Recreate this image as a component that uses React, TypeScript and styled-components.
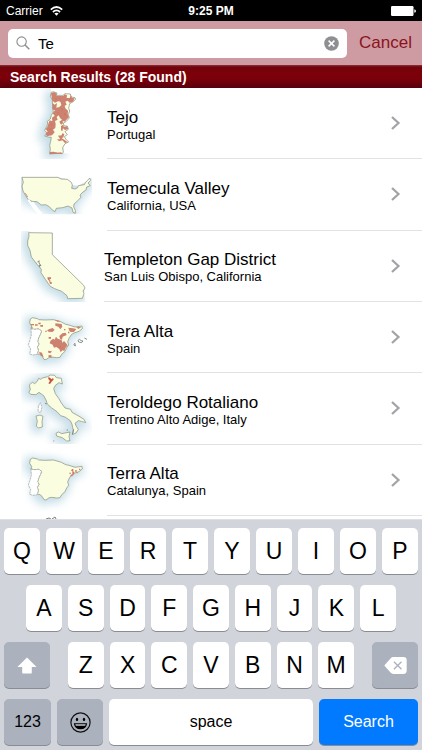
import React, { useId, useState } from "react";
import styled, { createGlobalStyle } from "styled-components";

const GlobalStyle = createGlobalStyle`
  * { box-sizing: border-box; }
  body {
    margin: 0;
    background: #fff;
    color: #000;
    font-family: "Liberation Sans", Arial, Helvetica, sans-serif;
  }
  button, input { font: inherit; color: inherit; margin: 0; }
  button { border: 0; padding: 0; background: none; cursor: pointer; }
`;

const Screen = styled.div`
  display: flex;
  flex-direction: column;
  height: 100vh;
  overflow: hidden;
`;

const StatusBar = styled.header`
  flex: none;
  display: grid;
  grid-template-columns: 1fr auto 1fr;
  align-items: center;
  height: 21px;
  padding: 0 6px;
  background: #000;
  color: #fff;
  font-size: 12px;
`;

const Carrier = styled.div`
  display: flex;
  align-items: center;
  gap: 7px;
`;

const Clock = styled.div`
  font-weight: bold;
`;

const Battery = styled.svg`
  justify-self: end;
`;

const SearchBar = styled.form`
  flex: none;
  display: flex;
  align-items: center;
  gap: 12px;
  height: 44px;
  padding: 0 10px 0 8px;
  background: #ce9ba2;
`;

const Field = styled.label`
  flex: 1;
  min-width: 0;
  display: flex;
  align-items: center;
  gap: 8px;
  height: 29px;
  padding: 0 8px;
  border-radius: 5px;
  background: #fff;
`;

const SearchInput = styled.input`
  flex: 1;
  min-width: 0;
  border: 0;
  padding: 0;
  outline: 0;
  background: transparent;
  font-size: 15px;
`;

const ClearButton = styled.button`
  display: flex;
`;

const CancelButton = styled.button`
  color: #8b1220;
  font-size: 17px;
`;

const SectionTitle = styled.h2`
  flex: none;
  margin: 0;
  height: 23px;
  padding: 0 10px;
  background: linear-gradient(#92303a 0, #6f040c 2px, #7d0008 8px, #78000a 15px, #56000c 23px);
  color: #fff;
  font-size: 14px;
  line-height: 24px;
`;

const Results = styled.ul`
  flex: 1;
  min-height: 0;
  display: grid;
  grid-template-rows: repeat(6, 1fr) 3px;
  margin: 0;
  padding: 0;
  overflow: hidden;
  list-style: none;
`;

const Result = styled.li`
  display: flex;
  min-height: 0;
  padding-left: 21px;
  overflow: hidden;
`;

const Thumb = styled.svg<{ $narrow?: boolean }>`
  flex: none;
  width: 71px;
  height: 71px;
  margin-right: ${(p) => (p.$narrow ? 12 : 15)}px;
`;

const ResultLink = styled.a`
  flex: 1;
  min-width: 0;
  display: flex;
  align-items: center;
  justify-content: space-between;
  padding-right: 21px;
  border-bottom: 1px solid #e2e2e4;
  color: inherit;
  text-decoration: none;
`;

const ResultText = styled.div`
  padding-top: 3px;
`;

const Name = styled.div`
  font-size: 17px;
  line-height: 19px;
`;

const Place = styled.div`
  font-size: 13px;
  line-height: 15px;
`;

const Keyboard = styled.section`
  flex: none;
  display: flex;
  flex-direction: column;
  gap: 11px;
  padding: 8px 4px 5px;
  border-top: 1px solid #dddfe4;
  background: #d1d4db;
`;

const KeyRow = styled.div<{ $inset?: number }>`
  display: flex;
  justify-content: space-between;
  gap: 6px;
  padding: 0 ${(p) => p.$inset ?? 0}px;
`;

const LetterGroup = styled.div`
  flex: 1;
  display: flex;
  gap: 6px;
  margin: 0 12px;
`;

const Key = styled.button<{ $tone?: "gray" | "blue"; $width?: number; $size?: number }>`
  flex: ${(p) => (p.$width ? `0 0 ${p.$width}px` : "1 1 0")};
  display: flex;
  align-items: center;
  justify-content: center;
  min-width: 0;
  height: 46px;
  border-radius: 5px;
  background: ${(p) => (p.$tone === "gray" ? "#abb1bd" : p.$tone === "blue" ? "#027aff" : "#fff")};
  color: ${(p) => (p.$tone === "blue" ? "#fff" : "#000")};
  box-shadow: 0 1px 0 #898c91;
  font-size: ${(p) => p.$size ?? 23}px;
`;

type MapShape = {
  top: number;
  land: string[];
  plain?: string;
  spots?: string;
  dots?: string;
  marks?: string;
  river?: string;
};

const IBERIA =
  "M91 42L98 38L112 41L116 44L135 45L160 44L171 47L184 51L197 58L207 60L225 66L246 63L247 71L237 79L222 84L215 88L208 98L203 110L206 120L200 128L195 139L185 148L180 157L170 158L154 156L146 158L138 164L132 163L126 153L120 148L112 146L115 135L112 126L117 117L113 109L117 96L121 88L125 78L116 72L103 73L93 71L95 63L89 54Z";
const PORTUGAL =
  "M93 71L103 73L116 72L125 78L121 88L117 96L113 109L117 117L112 126L115 135L112 148L99 150L89 147L92 132L85 119L90 105L94 90Z";

const maps: Record<string, MapShape> = {
  tejo: {
    top: 9,
    land: [
      "M154 22L160 20L171 24L168 31L190 31L194 26L211 27L213 36L225 38L227 43L218 51L209 56L206 69L209 78L205 89L208 99L198 110L190 114L192 123L202 123L205 133L195 140L202 149L193 155L199 164L206 171L195 176L188 188L190 201L187 206L167 203L149 207L151 191L149 181L152 169L154 157L145 156L134 153L141 144L134 136L143 119L142 109L151 102L154 91L160 81L158 66L157 45L151 34Z",
    ],
    spots:
      "M153 25L162 21L170 26L169 33L190 33L194 28L201 31L200 39L209 39L213 30L216 39L224 40L219 50L209 53L203 47L196 50L200 59L194 62L196 70L204 77L203 88L207 96L201 103L194 110L188 107L189 115L183 119L178 110L186 104L180 99L176 91L170 96L173 104L165 108L167 117L166 129L159 134L164 142L156 151L140 154L137 145L143 140L137 132L142 126L146 113L149 106L157 109L156 98L164 92L158 85L165 76L157 73L158 54L164 59L171 54L169 68L178 66L184 60L181 50L174 49L165 53L157 47ZM183 123L189 119L192 126L201 124L205 132L195 135L189 130L187 139L183 136ZM174 152L185 151L187 145L193 147L190 157L185 160L193 164L203 172L195 174L187 166L177 169L171 163L181 163ZM149 201L161 200L172 204L183 202L188 206L150 208Z",
    dots: "M177 38h5v5h-5zM166 40h6v5h-6zM184 70h5v6h-5zM171 81h6v5h-6zM192 84h6v7h-6zM148 129h6v6h-6zM153 117h5v5h-5z",
  },
  usa: {
    top: -17,
    land: [
      "M66 38L174 38L183 43L202 44L214 53L217 61L215 71L225 73L233 69L235 63L253 60L257 53L262 48L269 40L272 47L264 55L271 63L260 67L258 76L249 82L240 91L243 98L233 108L222 118L221 127L226 137L226 146L219 143L216 130L204 124L188 129L169 131L165 141L157 136L148 126L137 120L124 121L111 111L96 110L84 104L76 91L69 79L66 64L70 53Z",
    ],
    dots: "M79 88h2v5h2v4h-3zM75 85h2v4h-2z",
    river: "M85 105L103 132L119 148M97 112L111 132L125 148",
  },
  california: {
    top: 17,
    land: [
      "M86 22L157 23L157 88L251 180L255 188L249 197L252 205L247 219L203 220L201 211L185 198L164 190L151 183L145 175L136 162L123 142L124 132L112 118L94 95L90 75L83 60L83 47L87 33Z",
    ],
    dots: "M142 156h11v5h-4v4h-5zM147 165h4v5h4v6h-5z",
    marks: "M112 111l5-5v7l6 8l-6-2l3 7",
  },
  spainFull: {
    top: -9,
    land: [IBERIA],
    plain: PORTUGAL,
    spots:
      "M151 108L159 101L164 104L168 95L173 101L185 105L187 113L192 108L197 113L203 121L197 128L193 138L187 136L182 142L178 132L169 126L162 128L158 119L149 115ZM166 55L185 57L187 65L181 73L175 65L166 62ZM141 76L148 72L158 69L164 75L157 81L146 80ZM178 93L187 85L197 83L200 90L188 95L186 104L180 101ZM205 68L219 70L229 72L222 81L212 81L208 77ZM229 66L244 66L235 72ZM117 140L126 143L131 157L121 151ZM144 137L156 139L151 145L145 143ZM145 151L154 150L155 158L146 156ZM164 44L181 48L173 51Z",
    dots: "M92 57h10v4h-10zM105 58h8v4h-8zM115 53h7v5h-7zM121 60h8v5h-8zM136 77h4v4h-4zM146 96h7v5h-7zM192 72h4v4h-4zM204 80h4v5h-4zM94 65h4v3h-4zM177 124h6v6h-6z",
    marks: "M221 119l4-4l1 8zM234 106l5-3l4 4l6 1l-4 5l-9-2zM253 99l8 4M163 207h2",
  },
  italy: {
    top: 10,
    land: [
      "M88 46L97 38L104 42L112 35L116 26L122 29L128 25L143 21L152 16L164 17L169 24L184 26L187 43L177 39L166 47L161 57L166 72L176 86L184 100L195 115L212 119L216 128L234 138L252 149L257 159L244 155L235 153L225 161L229 170L235 179L228 190L218 194L220 182L216 164L211 153L195 142L182 138L171 126L154 114L142 103L138 91L131 78L117 68L108 75L92 74L87 68L91 59Z",
      "M168 191L176 187L185 192L210 187L207 201L210 213L200 214L187 204L170 199Z",
      "M108 139L120 136L129 140L126 155L127 172L115 175L109 169L112 155Z",
    ],
    plain: "M115 110L121 99L126 112L122 129L114 126Z",
    spots: "M145 22L151 25L154 29L159 25L161 30L156 35L150 43L145 41L150 34L145 28Z",
    marks: "M135 101l5 2M160 214h3M200 181h4M221 179l-4 16",
  },
  spainEast: {
    top: -1,
    land: [IBERIA],
    plain: PORTUGAL,
    dots: "M216 71h4v8h3v4h-6v-6h-4zM226 74h4v6h-4zM237 70h4v4h-4zM208 82h5v3h-5zM212 88h5v-5h5v5h-4v5h-6zM230 81h3v3h-3z",
  },
};

function RegionMap({ name, narrow }: { name: string; narrow?: boolean }) {
  const id = useId();
  const m = maps[name];
  return (
    <Thumb viewBox={`63 ${m.top} 213 213`} $narrow={narrow} aria-hidden="true">
      <defs>
        <filter id={id} x="-40%" y="-40%" width="180%" height="180%">
          <feGaussianBlur stdDeviation="12" />
        </filter>
      </defs>
      <g filter={`url(#${id})`} fill="#b3d3e0" stroke="#b3d3e0" strokeWidth="22" opacity="0.75" transform="translate(-6 5)">
        {m.land.map((d) => <path key={d} d={d} />)}
      </g>
      {name === "california" && <path d="M88 17H276V230H257L252 205L255 188L157 88V23H88Z" fill="#fff" />}
      {name === "tejo" && <path d="M154 9H276V222H221Q217 209 203 205H190V60L154 22Z" fill="#fff" />}
      {name === "usa" && <path d="M63 -17H276V38L262 48L235 63L217 61L202 44L174 38H63ZM63 149H276V196H63Z" fill="#fff" />}
      {m.land.map((d) => <path key={d} d={d} fill="#fafddf" stroke="#858b7b" strokeWidth="2" strokeLinejoin="round" />)}
      {m.plain && <path d={m.plain} fill="#fff" stroke="#8d9294" strokeWidth="1.8" strokeDasharray="7 2" />}
      {m.river && <path d={m.river} fill="none" stroke="#fff" strokeWidth="6" />}
      {m.spots && <path d={m.spots} fill={name === "italy" ? "#c5513e" : "#cd8170"} />}
      {m.dots && <path d={m.dots} fill="#cf7965" />}
      {m.marks && <path d={m.marks} fill="none" stroke="#777c78" strokeWidth="2.5" />}
    </Thumb>
  );
}

const results = [
  { name: "Tejo", place: "Portugal", map: "tejo" },
  { name: "Temecula Valley", place: "California, USA", map: "usa" },
  { name: "Templeton Gap District", place: "San Luis Obispo, California", map: "california", narrow: true },
  { name: "Tera Alta", place: "Spain", map: "spainFull" },
  { name: "Teroldego Rotaliano", place: "Trentino Alto Adige, Italy", map: "italy" },
  { name: "Terra Alta", place: "Catalunya, Spain", map: "spainEast" },
];

export default function App() {
  const [query, setQuery] = useState("Te");
  const type = (letter: string) => setQuery((q) => q + letter.toLowerCase());
  const letters = (row: string) =>
    row.split("").map((c) => <Key key={c} type="button" onClick={() => type(c)}>{c}</Key>);

  return (
    <Screen>
      <GlobalStyle />
      <StatusBar>
        <Carrier>
          Carrier
          <svg width="13" height="10" viewBox="0 0 13 10" fill="none" stroke="#fff" strokeWidth="1.7" aria-label="Wi-Fi">
            <path d="M0.8 3.6Q6.5 -1.6 12.2 3.6M2.9 6Q6.5 2.8 10.1 6" />
            <path d="M4.4 7.5Q6.5 5.8 8.6 7.5L6.5 9.7Z" fill="#fff" stroke="none" />
          </svg>
        </Carrier>
        <Clock>9:25 PM</Clock>
        <Battery width="25" height="10" viewBox="0 0 25 10" fill="#fff" aria-label="Battery full">
          <rect width="22.5" height="10" rx="1.2" />
          <path d="M23.3 3.2Q25 3.6 25 5T23.3 6.8Z" />
        </Battery>
      </StatusBar>

      <SearchBar onSubmit={(e) => e.preventDefault()}>
        <Field>
          <svg width="14" height="14" viewBox="0 0 14 14" fill="none" stroke="#8e8e93" strokeWidth="1.1" aria-hidden="true">
            <circle cx="5.6" cy="5.6" r="4.7" />
            <path d="M9 9L13.3 13.3" strokeWidth="1.5" />
          </svg>
          <SearchInput aria-label="Search" value={query} onChange={(e) => setQuery(e.target.value)} />
          <ClearButton type="button" aria-label="Clear text" onClick={() => setQuery("")}>
            <svg width="15" height="15" viewBox="0 0 15 15">
              <circle cx="7.5" cy="7.5" r="7.3" fill="#8e8e93" />
              <path d="M4.6 4.6L10.4 10.4M10.4 4.6L4.6 10.4" stroke="#fff" strokeWidth="1.5" />
            </svg>
          </ClearButton>
        </Field>
        <CancelButton type="button">Cancel</CancelButton>
      </SearchBar>

      <SectionTitle>Search Results (28 Found)</SectionTitle>

      <Results>
        {results.map((r) => (
          <Result key={r.name}>
            <RegionMap name={r.map} narrow={r.narrow} />
            <ResultLink href="#">
              <ResultText>
                <Name>{r.name}</Name>
                <Place>{r.place}</Place>
              </ResultText>
              <svg width="11" height="14" viewBox="0 0 11 14" fill="none" stroke="#a2a2a7" strokeWidth="2.2" aria-hidden="true">
                <path d="M2 1L8.5 7L2 13" />
              </svg>
            </ResultLink>
          </Result>
        ))}
        <Result aria-hidden="true">
          <Thumb viewBox="0 0 71 71">
            <path d="M25 3L28 2L30 3M31 3L34 1L35 3" fill="none" stroke="#777c78" />
          </Thumb>
        </Result>
      </Results>

      <Keyboard aria-label="Keyboard">
        <KeyRow>{letters("QWERTYUIOP")}</KeyRow>
        <KeyRow $inset={22}>{letters("ASDFGHJKL")}</KeyRow>
        <KeyRow>
          <Key type="button" $tone="gray" $width={46} aria-label="Shift">
            <svg width="20" height="17" viewBox="0 0 20 17" fill="#fff">
              <path d="M10 0.5L19.6 10H14.8V15.4Q14.8 16.6 13.6 16.6H6.4Q5.2 16.6 5.2 15.4V10H0.4Z" />
            </svg>
          </Key>
          <LetterGroup>{letters("ZXCVBNM")}</LetterGroup>
          <Key type="button" $tone="gray" $width={46} aria-label="Delete" onClick={() => setQuery((q) => q.slice(0, -1))}>
            <svg width="23" height="17" viewBox="0 0 23 17">
              <path d="M0.3 8.5L6.5 1.4Q7.7 0.1 9.4 0.1H19.5Q22.7 0.1 22.7 3.2V13.8Q22.7 16.9 19.5 16.9H9.4Q7.7 16.9 6.5 15.6Z" fill="#fff" />
              <path d="M9.9 4.7L17.5 12.3M17.5 4.7L9.9 12.3" stroke="#abb1bd" strokeWidth="1.3" />
            </svg>
          </Key>
        </KeyRow>
        <KeyRow>
          <Key type="button" $tone="gray" $width={47} $size={16}>123</Key>
          <Key type="button" $tone="gray" $width={46} aria-label="Emoji">
            <svg width="21" height="21" viewBox="0 0 21 21">
              <circle cx="10.5" cy="10.5" r="9.6" fill="none" stroke="#111" strokeWidth="1.2" />
              <ellipse cx="7" cy="7.4" rx="1.2" ry="1.6" />
              <ellipse cx="14" cy="7.4" rx="1.2" ry="1.6" />
              <path d="M3.8 11.2H17.2Q16.4 17.2 10.5 17.2T3.8 11.2Z" />
              <path d="M5.3 12.2H15.7L15.2 13.8H5.8Z" fill="#c5cad2" />
            </svg>
          </Key>
          <Key type="button" $size={16} onClick={() => type(" ")}>space</Key>
          <Key type="submit" $tone="blue" $width={99} $size={16}>Search</Key>
        </KeyRow>
      </Keyboard>
    </Screen>
  );
}
